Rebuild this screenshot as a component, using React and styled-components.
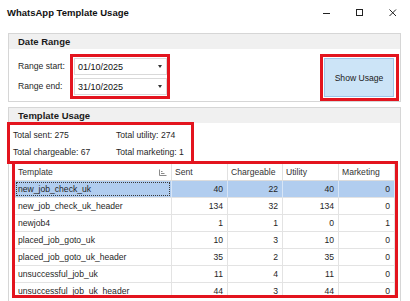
import React from "react";
import styled, { createGlobalStyle } from "styled-components";

const GlobalStyle = createGlobalStyle`
  html, body { margin: 0; padding: 0; background: #fff; }
  body {
    font-family: "Liberation Sans", Arial, sans-serif;
    font-size: 8.6px;
    color: #1f1f1f;
  }
  * { box-sizing: border-box; }
`;

const RED = "#e3141e";

const Window = styled.div`
  width: 410px;
  height: 301px;
  overflow: hidden;
  background: #fff;
  display: flex;
  flex-direction: column;
`;

const TitleBar = styled.div`
  height: 25px;
  flex-shrink: 0;
  display: flex;
  align-items: center;
  padding-left: 7px;
`;

const Title = styled.div`
  flex: 1;
  font-size: 9.5px;
  font-weight: bold;
  color: #111;
`;

const Controls = styled.div`
  display: flex;
  height: 100%;
  margin-right: 1px;
`;

const ControlButton = styled.div`
  width: 33px;
  height: 100%;
  display: flex;
  align-items: center;
  justify-content: center;
`;

const Content = styled.div`
  flex: 1;
  display: flex;
  flex-direction: column;
  padding: 8px 9px 0 8px;
`;

const Group = styled.div`
  border: 1px solid #d6d6d6;
  margin-top: ${(p) => p.$gap || 0}px;
  ${(p) => (p.$fill ? "flex: 1; min-height: 220px;" : "")}
`;

const GroupHeader = styled.div`
  height: 15px;
  line-height: 15px;
  background: #f0f0f0;
  padding-left: 9px;
  font-size: 9.5px;
  font-weight: bold;
  color: #1a1a1a;
`;

const DateBody = styled.div`
  display: flex;
  padding: 5px 1px 0 9px;
`;

const Labels = styled.div`
  width: 52px;
  padding-top: 4px;
  display: flex;
  flex-direction: column;
  gap: 3px;
`;

const Label = styled.div`
  height: 17px;
  line-height: 17px;
  white-space: nowrap;
`;

const Frame = styled.div`
  border: 3px solid ${RED};
  width: ${(p) => p.$w}px;
  height: ${(p) => p.$h}px;
  margin: ${(p) => p.$m || "0"};
  padding: ${(p) => p.$p || "0"};
  ${(p) => (p.$clip ? "overflow: hidden;" : "")}
  position: relative;
`;

const DateInputs = styled.div`
  display: flex;
  flex-direction: column;
  gap: 3px;
`;

const DateInput = styled.div`
  width: 93px;
  height: 17px;
  border: 1px solid #d9d9d9;
  background: #fff;
  display: flex;
  align-items: center;
  padding: 0 4px 0 3px;
  font-size: 9px;
  color: #111;
`;

const DateText = styled.span`
  flex: 1;
`;

const DropArrow = styled.span`
  width: 0;
  height: 0;
  border-left: 2.5px solid transparent;
  border-right: 2.5px solid transparent;
  border-top: 3px solid #333;
`;

const Spacer = styled.div`
  flex: 1;
`;

const ShowButton = styled.button`
  width: 100%;
  height: 100%;
  margin: 0;
  background: #cce4f7;
  border: 1px solid #9cc6ea;
  font-family: inherit;
  font-size: 8.6px;
  color: #1a1a1a;
  padding: 0;
`;

const Totals = styled.div`
  display: grid;
  grid-template-columns: 103px auto;
  line-height: 17px;
  white-space: nowrap;
`;

const Grid = styled.div`
  display: grid;
  grid-template-columns: 157px 56px 55px 56px 56px;
  grid-auto-rows: 17px;
`;

const HeadCell = styled.div`
  display: flex;
  align-items: center;
  padding: 0 4px 0 3px;
  border-right: 1px solid #e1e1e1;
  border-bottom: 1px solid #dcdcdc;
  background: #fff;
  color: #333;
  white-space: nowrap;
  &:last-child { border-right: none; }
`;

const Cell = styled.div`
  display: flex;
  align-items: center;
  justify-content: ${(p) => (p.$num ? "flex-end" : "flex-start")};
  padding: 0 4px 0 3px;
  border-right: 1px solid ${(p) => (p.$sel ? "#d7e5f6" : "#e3e3e3")};
  border-bottom: 1px solid #e3e3e3;
  background: ${(p) => (p.$sel ? "#b1cdef" : "#fff")};
  color: #1f1f1f;
  white-space: nowrap;
  position: relative;
  ${(p) =>
    p.$focus
      ? `&::after { content: ""; position: absolute; inset: 1px 1px 1px 1px; border: 1px dotted #3a3a3a; }`
      : ""}
`;

const HeadLabel = styled.span`
  flex: 1;
`;

const rows = [
  ["new_job_check_uk", 40, 22, 40, 0],
  ["new_job_check_uk_header", 134, 32, 134, 0],
  ["newjob4", 1, 1, 0, 1],
  ["placed_job_goto_uk", 10, 3, 10, 0],
  ["placed_job_goto_uk_header", 35, 2, 35, 0],
  ["unsuccessful_job_uk", 11, 4, 11, 0],
  ["unsuccessful_job_uk_header", 44, 3, 44, 0],
];

const SortGlyph = () => (
  <svg width="8" height="7" viewBox="0 0 8 7" fill="none" stroke="#8a8a8a" strokeWidth="1">
    <path d="M0.5 0.5 L0.5 6.5 L7.5 6.5" />
    <path d="M2 4.5 H5.5 M2 2.5 H3.5" />
  </svg>
);

export default function App() {
  return (
    <>
      <GlobalStyle />
      <Window>
        <TitleBar>
          <Title>WhatsApp Template Usage</Title>
          <Controls>
            <ControlButton>
              <svg width="8" height="8" viewBox="0 0 8 8">
                <path d="M0 4.5 H7" stroke="#222" strokeWidth="1" />
              </svg>
            </ControlButton>
            <ControlButton>
              <svg width="8" height="8" viewBox="0 0 8 8" fill="none">
                <rect x="0.5" y="0.5" width="6" height="6" stroke="#222" strokeWidth="1" />
              </svg>
            </ControlButton>
            <ControlButton>
              <svg width="8" height="8" viewBox="0 0 8 8">
                <path d="M0.5 0.5 L7 7 M7 0.5 L0.5 7" stroke="#222" strokeWidth="1" />
              </svg>
            </ControlButton>
          </Controls>
        </TitleBar>

        <Content>
          <Group>
            <GroupHeader>Date Range</GroupHeader>
            <DateBody>
              <Labels>
                <Label>Range start:</Label>
                <Label>Range end:</Label>
              </Labels>
              <Frame $w={100} $h={45} $p="1px 0 0 1px">
                <DateInputs>
                  <DateInput>
                    <DateText>01/10/2025</DateText>
                    <DropArrow />
                  </DateInput>
                  <DateInput>
                    <DateText>31/10/2025</DateText>
                    <DropArrow />
                  </DateInput>
                </DateInputs>
              </Frame>
              <Spacer />
              <Frame $w={79} $h={47} $p="1px 2px 1px 1px">
                <ShowButton>Show Usage</ShowButton>
              </Frame>
            </DateBody>
          </Group>

          <Group $gap={5} $fill>
            <GroupHeader>Template Usage</GroupHeader>
            <Frame $w={187} $h={42} $m="-1px 0 0 -2px" $p="2px 0 0 3px">
              <Totals>
                <span>Total sent: 275</span>
                <span>Total utility: 274</span>
                <span>Total chargeable: 67</span>
                <span>Total marketing: 1</span>
              </Totals>
            </Frame>
            <Frame $w={386} $h={137} $m="-3px 0 0 3px" $clip>
              <Grid>
                <HeadCell>
                  <HeadLabel>Template</HeadLabel>
                  <SortGlyph />
                </HeadCell>
                <HeadCell>Sent</HeadCell>
                <HeadCell>Chargeable</HeadCell>
                <HeadCell>Utility</HeadCell>
                <HeadCell>Marketing</HeadCell>
                {rows.map((r, i) =>
                  r.map((v, j) => (
                    <Cell key={`${i}-${j}`} $num={j > 0} $sel={i === 0} $focus={i === 0 && j === 0}>
                      {v}
                    </Cell>
                  ))
                )}
              </Grid>
            </Frame>
          </Group>
        </Content>
      </Window>
    </>
  );
}
